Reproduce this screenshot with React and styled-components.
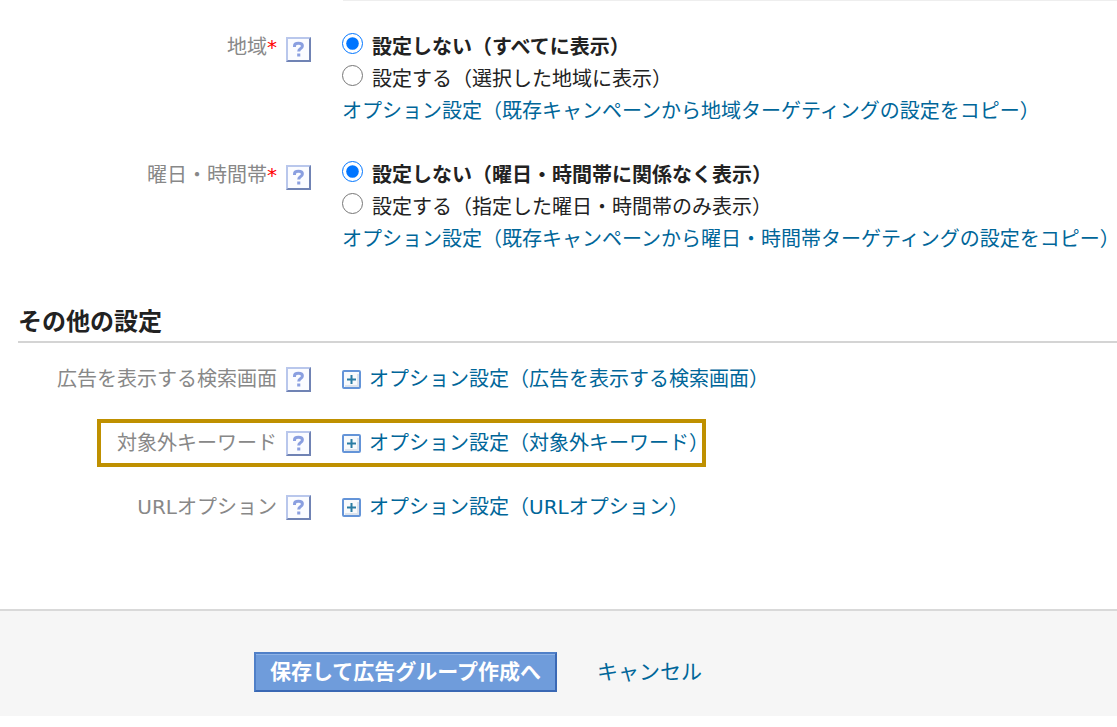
import React from "react";
import { useState } from "react";
import styled, { createGlobalStyle } from "styled-components";

const GlobalStyle = createGlobalStyle`
  * {
    box-sizing: border-box;
  }
  body {
    margin: 0;
    background-color: #ffffff;
    color: #222222;
    font-family: "DejaVu Sans", "Noto Sans CJK JP", sans-serif;
    font-size: 20px;
    line-height: 32px;
  }
`;

// ターゲティング設定
const TargetingSection = styled.section`
  display: flex;
  flex-direction: column;
  gap: 32px;
`;

const TopLine = styled.div`
  height: 1px;
  margin: 0 0 30px 343px;
  background-color: #eeeeee;
`;

// その他の設定
const OtherSection = styled.section`
  display: flex;
  flex-direction: column;
  gap: 32px;
  padding: 20px 0 86px;
`;

const SectionTitle = styled.h2`
  margin: 48px 0 0 18px;
  padding: 3px 0;
  border-bottom: 2px solid #d4d4d4;
  font-size: 24px;
  line-height: 32px;
`;

// 1行(ラベル+設定内容)
const Row = styled.div`
  position: relative;
  display: grid;
  grid-template-columns: 311px minmax(0, auto);
  column-gap: 31px;
  width: fit-content;
`;

const LabelCell = styled.div`
  display: flex;
  justify-content: flex-end;
  align-items: flex-start;
  gap: 9px;
  color: #888888;
  white-space: nowrap;
`;

const Required = styled.span`
  color: #ff0000;
`;

const HelpButton = styled.button`
  display: flex;
  align-items: center;
  justify-content: center;
  width: 25px;
  height: 25px;
  margin-top: ${(props) => (props.$low ? "6px" : "4px")};
  padding: 0;
  border: 2px solid;
  border-color: #b9c7ec #7083b4 #7083b4 #b9c7ec;
  background-color: #fbfcff;
  cursor: pointer;
`;

const OptionList = styled.div`
  display: flex;
  flex-direction: column;
  align-items: flex-start;
`;

const RadioLabel = styled.label`
  display: flex;
  align-items: flex-start;
  gap: 9px;
  font-weight: ${(props) => (props.$checked ? "bold" : "normal")};
  cursor: pointer;
`;

const Radio = styled.input`
  width: 21px;
  height: 21px;
  margin: 2px 0 0;
`;

const TextLink = styled.a`
  color: #006699;
  text-decoration: none;
`;

const ExpandButton = styled.button`
  display: flex;
  align-items: center;
  gap: 8px;
  padding: 0;
  border: none;
  background: none;
  color: #006699;
  font: inherit;
  cursor: pointer;
`;

// 注目してほしい行の枠
const Highlight = styled.div`
  position: absolute;
  top: -8px;
  bottom: -8px;
  left: 97px;
  right: 3px;
  border: 4px solid #bf9000;
  pointer-events: none;
`;

// 下部のボタンエリア
const Footer = styled.footer`
  display: flex;
  align-items: center;
  gap: 40px;
  padding: 41px 20px 24px 254px;
  border-top: 2px solid #d9d9d9;
  background-color: #f6f6f6;
  font-size: 21px;
`;

const SaveButton = styled.button`
  height: 40px;
  padding: 0 14px;
  border: 2px solid;
  border-color: #5080c8 #3a68b4 #3a68b4 #5080c8;
  background-color: #6f9cdb;
  box-shadow: inset 0 1px 0 #8fb3e6;
  color: #ffffff;
  font: inherit;
  font-weight: bold;
  line-height: 32px;
  cursor: pointer;
`;

const HelpIcon = () => (
  <svg width="21" height="21" viewBox="0 0 21 21" fill="none" aria-hidden="true">
    <path
      d="M6.500 8V7C6.500 5 8 4.300 10.400 4.300c2.500 0 4 .9 4 2.700 0 1.500-.9 2.100-2 2.800-1.200.8-1.700 1.200-1.700 2.700"
      stroke="#8a9fe0"
      strokeWidth="3"
    />
    <path d="M9.200 14.500h3.100v3H9.200z" fill="#8a9fe0" />
  </svg>
);

const PlusIcon = () => (
  <svg width="19" height="19" viewBox="0 0 19 19" aria-hidden="true">
    <rect x="1" y="1" width="17" height="17" rx="1" fill="#f8fafc" stroke="#6494d8" strokeWidth="2" />
    <path d="M3 16h13V4" fill="none" stroke="#dce3ec" strokeWidth="2" />
    <path d="M5 9.500h9M9.500 5v9" stroke="#2a7ca3" strokeWidth="2" />
  </svg>
);

const FieldLabel = ({ text, required, low }) => (
  <LabelCell>
    <span>
      {text}
      {required && <Required>*</Required>}
    </span>
    <HelpButton type="button" $low={low} aria-label={`${text} ヘルプ`}>
      <HelpIcon />
    </HelpButton>
  </LabelCell>
);

const RadioRow = ({ name, label, options, copyText }) => {
  const [selected, setSelected] = useState(0);

  return (
    <Row role="radiogroup" aria-label={label}>
      <FieldLabel text={label} required low />
      <OptionList>
        {options.map((option, index) => (
          <RadioLabel key={option} $checked={selected === index}>
            <Radio
              type="radio"
              name={name}
              checked={selected === index}
              onChange={() => setSelected(index)}
            />
            {option}
          </RadioLabel>
        ))}
        <TextLink href="#copy">{copyText}</TextLink>
      </OptionList>
    </Row>
  );
};

const otherSettings = [
  { label: "広告を表示する検索画面" },
  { label: "対象外キーワード", highlight: true },
  { label: "URLオプション" },
];

const CampaignSettingPage = () => {
  return (
    <div>
      <GlobalStyle />
      <TopLine />
      <TargetingSection>
        <RadioRow
          name="area"
          label="地域"
          options={["設定しない（すべてに表示）", "設定する（選択した地域に表示）"]}
          copyText="オプション設定（既存キャンペーンから地域ターゲティングの設定をコピー）"
        />
        <RadioRow
          name="schedule"
          label="曜日・時間帯"
          options={[
            "設定しない（曜日・時間帯に関係なく表示）",
            "設定する（指定した曜日・時間帯のみ表示）",
          ]}
          copyText="オプション設定（既存キャンペーンから曜日・時間帯ターゲティングの設定をコピー）"
        />
      </TargetingSection>

      <SectionTitle>その他の設定</SectionTitle>
      <OtherSection>
        {otherSettings.map((item) => (
          <Row key={item.label}>
            <FieldLabel text={item.label} />
            <ExpandButton type="button">
              <PlusIcon />
              オプション設定（{item.label}）
            </ExpandButton>
            {item.highlight && <Highlight />}
          </Row>
        ))}
      </OtherSection>

      <Footer>
        <SaveButton type="button">保存して広告グループ作成へ</SaveButton>
        <TextLink href="#cancel">キャンセル</TextLink>
      </Footer>
    </div>
  );
};

export default CampaignSettingPage;
